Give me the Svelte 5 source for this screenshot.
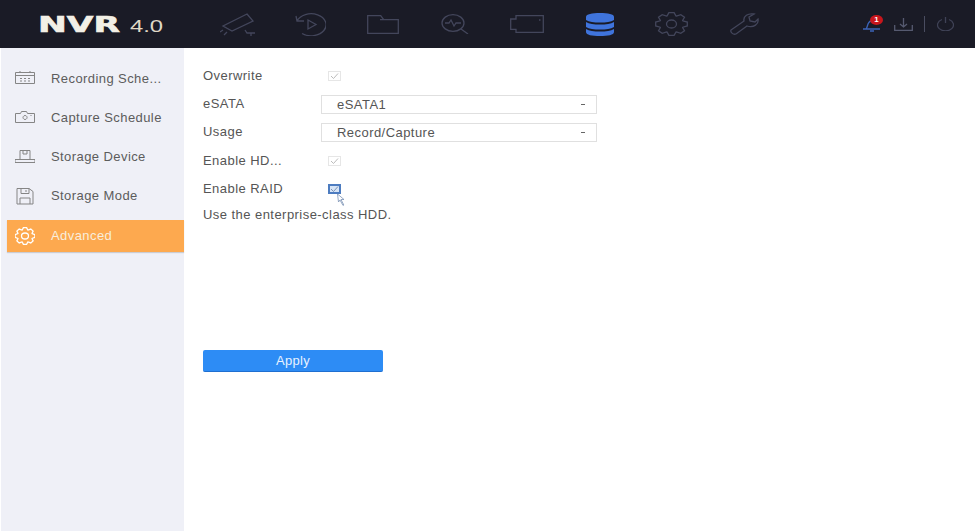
<script lang="ts">
	const menu = [
		{ id: 'calendar', label: 'Recording Sche...' },
		{ id: 'camera', label: 'Capture Schedule' },
		{ id: 'device', label: 'Storage Device' },
		{ id: 'floppy', label: 'Storage Mode' },
		{ id: 'gear', label: 'Advanced', active: true }
	];

	// eight toothed wheel, rx and ry differ because the shot is stretched sideways
	const gearPath = (cx: number, cy: number, rx: number, ry: number, teeth = 8) => {
		const pts: string[] = [];
		for (let i = 0; i < teeth; i++) {
			const a = (i / teeth) * Math.PI * 2;
			const w = Math.PI / teeth;
			for (const [da, k] of [[-w * 0.95, 0.76], [-w * 0.42, 1], [w * 0.42, 1], [w * 0.95, 0.76]]) {
				const x = cx + Math.cos(a + da) * rx * k;
				const y = cy + Math.sin(a + da) * ry * k;
				pts.push(`${x.toFixed(1)} ${y.toFixed(1)}`);
			}
		}
		return 'M' + pts.join('L') + 'z';
	};
</script>

<div class="page">
	<header class="topbar">
		<div class="logo"><b>NVR</b><span>4.0</span></div>
		<nav class="nav">
			<svg class="cam" width="35" height="23" viewBox="0 0 35 23">
				<path d="M27 1l6 7-21 10-9-5zM3 17l-3 2M7 19l-3 3M25 17l2 3h8M31 20v3" />
			</svg>
			<svg class="play" width="31" height="23" viewBox="0 0 31 23">
				<path d="M1 3l1 5h7M2 8A15 11 0 1 1 7 20.500M13 7l8 4.500-8 4.500z" />
			</svg>
			<svg width="32" height="19" viewBox="0 0 32 19">
				<path d="M.7 18.300V.7h13l3 4h14.600v13.600zM13 4.700h4" />
			</svg>
			<svg width="28" height="20" viewBox="0 0 28 20">
				<ellipse cx="12" cy="9" rx="11" ry="8.300" />
				<path d="M20 15l7 5M4 9h4l2-3 3 6 2-3h5" />
			</svg>
			<svg width="34" height="18" viewBox="0 0 34 18">
				<path d="M6 .7h27.300v16.600H6v-3H.7V4H6zM29 5h1.500" />
			</svg>
			<svg class="db" width="28" height="23" viewBox="0 0 28 23">
				<path d="M0 4C0 1 6 0 14 0s14 1 14 4v3c-3 2-8 2.500-14 2.500S3 9 0 7z" />
				<path d="M0 9c3 2 8 2.500 14 2.500S25 11 28 9v5c-3 2-8 2.500-14 2.500S3 16 0 14z" />
				<path d="M0 16c3 2 8 2.500 14 2.500S25 18 28 16v3c0 3-6 4-14 4S0 22 0 19z" />
			</svg>
			<svg width="33" height="24" viewBox="0 0 33 24">
				<path d={gearPath(16.5, 12, 16, 11.500)} />
				<ellipse cx="16.500" cy="12" rx="5" ry="4" />
			</svg>
			<svg width="29" height="22" viewBox="0 0 29 22">
				<path d="M1 17 14 8C13 3 18 0 24 1l-5 3 1 4 5 1 3-3c1 5-4 9-11 7L6 21c-3 1-6-2-5-4z" />
			</svg>
		</nav>
		<div class="tools">
			<div class="bell">
				<svg width="20" height="15" viewBox="0 0 20 15">
					<path d="M0 12h17M3 12c2-2 1-7 5-8M7 14h4" />
				</svg>
				<span class="badge">1</span>
			</div>
			<svg class="dl" width="19" height="13" viewBox="0 0 19 13">
				<path d="M9.500 0v9M6 6l3.500 3L13 6M.7 7v5.300h17.600V7" />
			</svg>
			<i class="sep"></i>
			<svg class="power" width="17" height="14" viewBox="0 0 17 14">
				<path d="M5 2.500a8 6 0 1 0 7 0M8.500 0v6" />
			</svg>
		</div>
	</header>

	<div class="body">
		<aside class="side">
			{#each menu as item}
				<div class="item" class:active={item.active}>
					<svg class="ico" width="20" height="20" viewBox="0 0 20 20">
						{#if item.id === 'calendar'}
							<path d="M.5 4.500h19v11H.5zM.5 7.500h19M5 3v2M15 3v2M5 10.500h2M9 10.500h2M13 10.500h2M5 13h2M9 13h2M13 13h2" />
						{:else if item.id === 'camera'}
							<path d="M.5 6.500h5l1-2h5l1 2h7v9H.5zM10 8.500a2 2 0 1 0 .1 0zM15.500 8.500h1" />
						{:else if item.id === 'device'}
							<path d="M5 3.500h10v9H5zM8 3.500v3.500h4V3.500M0 12.500h20v3H0z" />
						{:else if item.id === 'floppy'}
							<path d="M2 2.500h12l4 3v12.500H2zM6 2.500v5h8v-5M5 18v-6h10v6M11 4v2" />
						{:else}
							<path d={gearPath(10, 10, 10, 8.500)} />
							<ellipse cx="10" cy="10" rx="3.500" ry="3" />
						{/if}
					</svg>
					<span>{item.label}</span>
				</div>
			{/each}
		</aside>

		<main class="content">
			<div class="form">
				<div class="row">
					<label>Overwrite</label>
					<span class="check"><svg viewBox="0 0 13 10"><path d="M3 5l2.500 2.500L10 2.500" /></svg></span>
				</div>
				<div class="row">
					<label>eSATA</label>
					<div class="select"><span>eSATA1</span><em></em></div>
				</div>
				<div class="row">
					<label>Usage</label>
					<div class="select"><span>Record/Capture</span><em></em></div>
				</div>
				<div class="row">
					<label>Enable HD...</label>
					<span class="check"><svg viewBox="0 0 13 10"><path d="M3 5l2.500 2.500L10 2.500" /></svg></span>
				</div>
				<div class="row">
					<label>Enable RAID</label>
					<span class="check on">
						<svg viewBox="0 0 13 10"><path d="M3 5l2.500 2.500L10 2.500" /></svg>
						<svg class="pointer" viewBox="0 0 8 12"><path d="M.5 0l1 8 1.500-2 3 5.500.8-.5-2.800-5.500H7z" /></svg>
					</span>
				</div>
				<p class="hint">Use the enterprise-class HDD.</p>
			</div>
			<button class="apply">Apply</button>
		</main>
	</div>
</div>

<style>
	:global(body) {
		margin: 0;
		background: #fff;
	}

	.page {
		width: 975px;
		height: 531px;
		display: flex;
		flex-direction: column;
		overflow: hidden;
		font-family: 'Liberation Sans', Arial, sans-serif;
		color: #555;
	}

	.topbar {
		height: 48px;
		flex: none;
		background: #1a1b26;
		display: flex;
		align-items: center;
		padding-left: 39px;
	}

	.logo {
		width: 181px;
		display: flex;
		align-items: baseline;
		color: #f3f0e6;
		padding-top: 1px;
	}

	.logo b {
		display: inline-block;
		width: 91px;
		margin-left: -1px;
		margin-right: 1px;
		font-family: 'DejaVu Sans', sans-serif;
		font-weight: 700;
		font-size: 21px;
		transform: scaleX(1.64);
		transform-origin: left;
		-webkit-text-stroke: 0.6px #f3f0e6;
	}

	.logo span {
		display: inline-block;
		font-size: 17px;
		color: #e0d9c6;
		transform: scaleX(1.4);
		transform-origin: left;
	}

	.nav {
		display: flex;
		align-items: center;
		gap: 41.500px;
		height: 100%;
	}

	svg {
		display: block;
		flex: none;
		fill: none;
		stroke: #43465b;
		stroke-width: 1.300;
	}

	.cam {
		margin-right: -2px;
	}

	.db path {
		fill: #3f74dc;
		stroke: none;
	}

	.tools {
		display: flex;
		align-items: center;
		margin-left: auto;
		padding-right: 21px;
	}

	.bell {
		position: relative;
		width: 20px;
		height: 15px;
		margin-right: 11px;
	}

	.bell svg {
		stroke: #3c64b8;
	}

	.badge {
		position: absolute;
		left: 7px;
		top: -2px;
		width: 13px;
		height: 10px;
		border-radius: 50%;
		background: #c8161c;
		color: #fff;
		font-size: 8px;
		font-weight: 700;
		line-height: 10px;
		text-align: center;
	}

	.dl {
		stroke: #565a70;
	}

	.sep {
		width: 1px;
		height: 16px;
		background: #4a4d60;
		margin: 0 12px 0 11px;
	}

	.power {
		stroke: #3f4256;
	}

	.body {
		flex: 1;
		display: flex;
		min-height: 0;
	}

	.side {
		width: 183px;
		margin-left: 1px;
		background: #eff0f7;
		padding-top: 10.500px;
		box-sizing: border-box;
	}

	.item {
		height: 39.250px;
		margin-left: 6px;
		padding-left: 8px;
		display: flex;
		align-items: center;
		gap: 16px;
		font-size: 13px;
		letter-spacing: 0.42px;
		color: #5c5c5c;
		box-sizing: border-box;
	}

	.item.active {
		height: 32px;
		margin-top: 4px;
		background: #fda94f;
		color: #f8eedd;
		box-shadow: 0 1px 1px rgba(0, 0, 0, 0.15);
	}

	.ico {
		stroke: #858585;
		stroke-width: 1;
	}

	.active .ico {
		stroke: #fff;
		stroke-width: 1.300;
	}

	.content {
		flex: 1;
		padding: 13.600px 0 0 19px;
	}

	.form {
		height: 288.400px;
	}

	.row {
		height: 28.300px;
		display: flex;
		align-items: center;
		font-size: 13px;
		letter-spacing: 0.45px;
	}

	.row label {
		width: 118px;
		margin-bottom: 1px;
	}

	.check {
		position: relative;
		width: 13px;
		height: 10px;
		margin-left: 7px;
		box-shadow: inset 0 0 0 1px #e6e6e6;
	}

	.check svg {
		width: 13px;
		height: 10px;
		stroke: #bcbcbc;
		stroke-width: 1;
	}

	.check.on {
		background: #d6e4f6;
		box-shadow: inset 0 0 0 2px #4d7cc0;
	}

	.check.on svg {
		stroke: #7c93b5;
	}

	.check .pointer {
		position: absolute;
		left: 9px;
		top: 10px;
		width: 8px;
		height: 12px;
		fill: #fff;
		stroke: #555;
		stroke-width: 0.800;
	}

	.select {
		width: 276px;
		height: 19px;
		border: 1px solid #e0e0e0;
		box-sizing: border-box;
		display: flex;
		align-items: center;
		justify-content: space-between;
		padding: 0 11px 0 15px;
	}

	.select em {
		width: 4px;
		height: 1px;
		background: #666;
	}

	.hint {
		margin: 3px 0 0;
		font-size: 13px;
		letter-spacing: 0.45px;
		line-height: 18px;
	}

	.apply {
		display: block;
		width: 180px;
		height: 22px;
		padding: 0;
		border: 0;
		border-bottom: 1px solid #1f6fd0;
		border-radius: 2px;
		background: #2d8cf5;
		color: #e8f2ff;
		font: 13px 'Liberation Sans', Arial, sans-serif;
		letter-spacing: 0.3px;
	}
</style>
